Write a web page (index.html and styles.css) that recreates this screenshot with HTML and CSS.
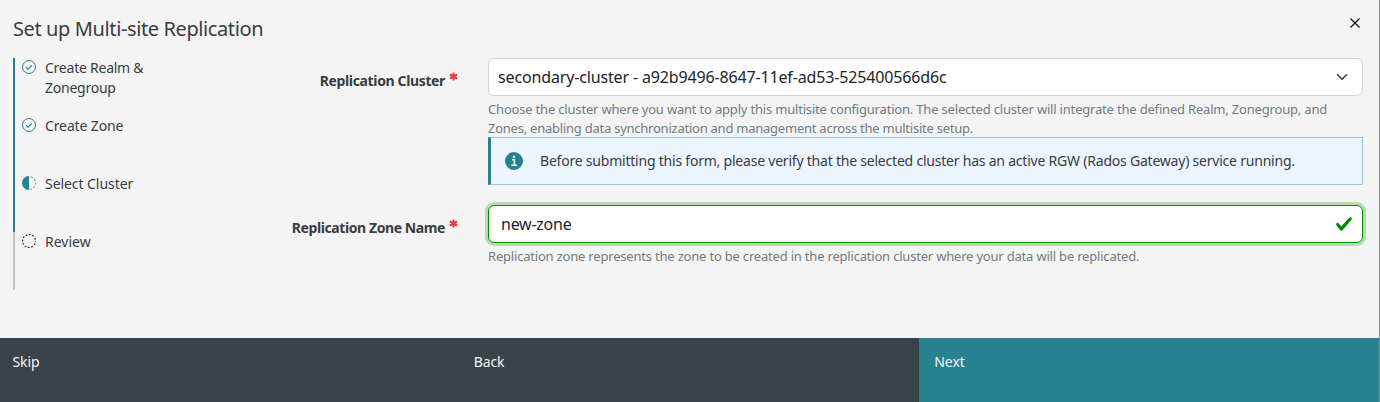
FILE: index.html
```html
<!DOCTYPE html>
<html lang="en">
<head>
<meta charset="utf-8">
<title>Set up Multi-site Replication</title>
<link rel="stylesheet" href="styles.css">
</head>
<body>
<div class="modal">
  <header class="header">
    <h1 class="title">Set up Multi-site Replication</h1>
    <button class="close" aria-label="Close"><svg width="20" height="20" viewBox="0 0 32 32"><path fill="currentColor" d="M17.4141 16L24 9.4141 22.5859 8 16 14.5859 9.4143 8 8 9.4141 14.5859 16 8 22.5859 9.4143 24 16 17.4141 22.5859 24 24 22.5859z"/></svg></button>
  </header>
  <main class="body">
    <ol class="steps">
      <li class="step done">
        <svg class="mark" viewBox="0 0 14 14"><circle cx="7" cy="7" r="6.5" fill="none" stroke="currentColor"/><path d="M4 7.2l2 2 3.9-3.9" fill="none" stroke="currentColor" stroke-width="1.1"/></svg>
        <span class="s1">Create Realm &amp;<br>Zonegroup</span>
      </li>
      <li class="step done">
        <svg class="mark" viewBox="0 0 14 14"><circle cx="7" cy="7" r="6.5" fill="none" stroke="currentColor"/><path d="M4 7.2l2 2 3.9-3.9" fill="none" stroke="currentColor" stroke-width="1.1"/></svg>
        <span class="s2">Create Zone</span>
      </li>
      <li class="step done">
        <svg class="mark" viewBox="0 0 14 14"><path d="M7 0a7 7 0 0 0 0 14z" fill="currentColor"/><path d="M7 .5a6.5 6.5 0 0 1 0 13" fill="none" stroke="currentColor" stroke-dasharray="1.9 1.9" stroke-dashoffset="-2"/></svg>
        <span class="s3">Select Cluster</span>
      </li>
      <li class="step">
        <svg class="mark" viewBox="0 0 14 14"><circle cx="7" cy="7" r="6.5" fill="none" stroke="currentColor" stroke-width="1.1" stroke-dasharray="1.7 1.704" stroke-dashoffset=".85"/></svg>
        <span>Review</span>
      </li>
    </ol>
    <form class="form">
      <div class="row">
        <label class="label"><span class="l1">Replication Cluster</span><svg class="star" viewBox="0 0 10 10"><path d="M5 .5v9M1 2.8l8 4.4M1 7.2l8-4.4" stroke="currentColor" stroke-width="2.3"/></svg></label>
        <div class="field">
          <div class="control select"><span class="v1">secondary-cluster - a92b9496-8647-11ef-ad53-525400566d6c</span><svg width="12" height="12" viewBox="0 0 16 16"><path d="M2 5l6 6 6-6" fill="none" stroke="#343a40" stroke-width="2" stroke-linecap="round" stroke-linejoin="round"/></svg></div>
          <p class="help"><span class="h1">Choose the cluster where you want to apply this multisite configuration. The selected cluster will integrate the defined Realm, Zonegroup, and</span><br><span class="h2">Zones, enabling data synchronization and management across the multisite setup.</span></p>
          <div class="alert"><svg class="info" viewBox="0 0 18 18"><circle cx="9" cy="9" r="9" fill="#25828e"/><path d="M7 7.7h2.4v5.4M6.3 13.3h5.6" fill="none" stroke="#edf5ff" stroke-width="1.6"/><circle cx="9" cy="4.7" r="1.3" fill="#edf5ff"/></svg><span class="a1">Before submitting this form, please verify that the selected cluster has an active RGW (Rados Gateway) service running.</span></div>
        </div>
      </div>
      <div class="row">
        <label class="label"><span class="l2">Replication Zone Name</span><svg class="star" viewBox="0 0 10 10"><path d="M5 .5v9M1 2.8l8 4.4M1 7.2l8-4.4" stroke="currentColor" stroke-width="2.3"/></svg></label>
        <div class="field">
          <div class="control valid"><span class="v2">new-zone</span><svg width="18" height="18" viewBox="0 0 8 8"><path fill="#008a00" d="M2.3 6.73L.6 4.53c-.4-1.04.46-1.4 1.1-.8l1.1 1.4 3.4-3.8c.6-.63 1.6-.27 1.2.7l-4 4.6c-.43.5-.8.4-1.1.1z"/></svg></div>
          <p class="help"><span class="h3">Replication zone represents the zone to be created in the replication cluster where your data will be replicated.</span></p>
        </div>
      </div>
    </form>
  </main>
  <footer class="footer">
    <button class="btn skip">Skip</button>
    <button class="btn">Back</button>
    <button class="btn next">Next</button>
  </footer>
</div>
</body>
</html>
```

FILE: styles.css
```css
* { box-sizing: border-box; }
body { margin: 0; background: #8d8d8d; font: 14px/20px "Noto Sans", sans-serif; color: #373d43; }
.modal { width: 1379px; height: 402px; background: #f4f4f4; display: flex; flex-direction: column; }
.header { height: 58px; display: flex; justify-content: space-between; padding: 13px 14px 0 13px; }
.title { margin: 0; font-size: 20px; line-height: 32px; font-weight: 400; white-space: nowrap; letter-spacing: -.39px; }
.close { border: 0; background: none; padding: 0; width: 20px; height: 20px; color: #161616; }
.close svg { display: block; }
.body { flex: 1; display: flex; }
.steps { list-style: none; margin: 0 0 0 13px; padding: 0; width: 245px; }
.step { height: 58px; border-left: 2px solid #c6c6c6; padding-left: 7px; display: flex; gap: 9px; color: #373d43; }
.step.done { border-color: #25828e; }
.step span { white-space: nowrap; }
.s1 { letter-spacing: -.24px; }
.s2 { letter-spacing: -.12px; }
.s3 { letter-spacing: -.06px; }
.mark { width: 14px; height: 14px; margin-top: 2px; flex: none; color: #161616; }
.done .mark { color: #25828e; }
.form { width: 1105px; display: flex; flex-direction: column; gap: 20px; }
.row { display: grid; grid-template-columns: 230px 875px; }
.label { padding: 13px 30px 0 0; display: flex; justify-content: flex-end; gap: 4px; font-weight: 700; white-space: nowrap; }
.l1 { letter-spacing: -.36px; }
.l2 { letter-spacing: -.41px; }
.star { width: 9px; height: 9px; margin-top: 1px; color: #e23c50; }
.control { height: 38px; background: #fff; border: 1px solid #ced4da; border-radius: 6px; padding: 0 14px 0 9px; display: flex; align-items: center; justify-content: space-between; font-size: 16px; color: #212529; white-space: nowrap; }
.valid { border-color: #008a00; box-shadow: 0 0 0 3px rgba(0, 138, 0, .25); padding: 0 9px 0 12px; }
.v1 { letter-spacing: -.15px; }
.v2 { letter-spacing: -.25px; }
.help { margin: 4px 0 0; font-size: 13px; line-height: 19px; color: #727b83; white-space: nowrap; height: 37px; }
.h1 { letter-spacing: -.187px; }
.h2 { letter-spacing: -.24px; }
.h3 { letter-spacing: -.196px; }
.alert { height: 48px; background: #edf5ff; border: 1px solid #97c6d3; border-left: 3px solid #25828e; padding-left: 14px; display: flex; align-items: center; gap: 17px; white-space: nowrap; }
.a1 { letter-spacing: -.216px; }
.info { width: 18px; height: 18px; flex: none; }
.footer { height: 64px; display: grid; grid-template-columns: repeat(3, 1fr); background: #394348; }
.btn { border: 0; background: none; color: #f4f4f4; font: inherit; text-align: left; padding: 14px 14px 0; display: flex; align-items: flex-start; letter-spacing: -.1px; }
.skip { padding-left: 12.5px; }
.next { background: #25828e; padding-left: 15px; letter-spacing: -.1px; }
```
